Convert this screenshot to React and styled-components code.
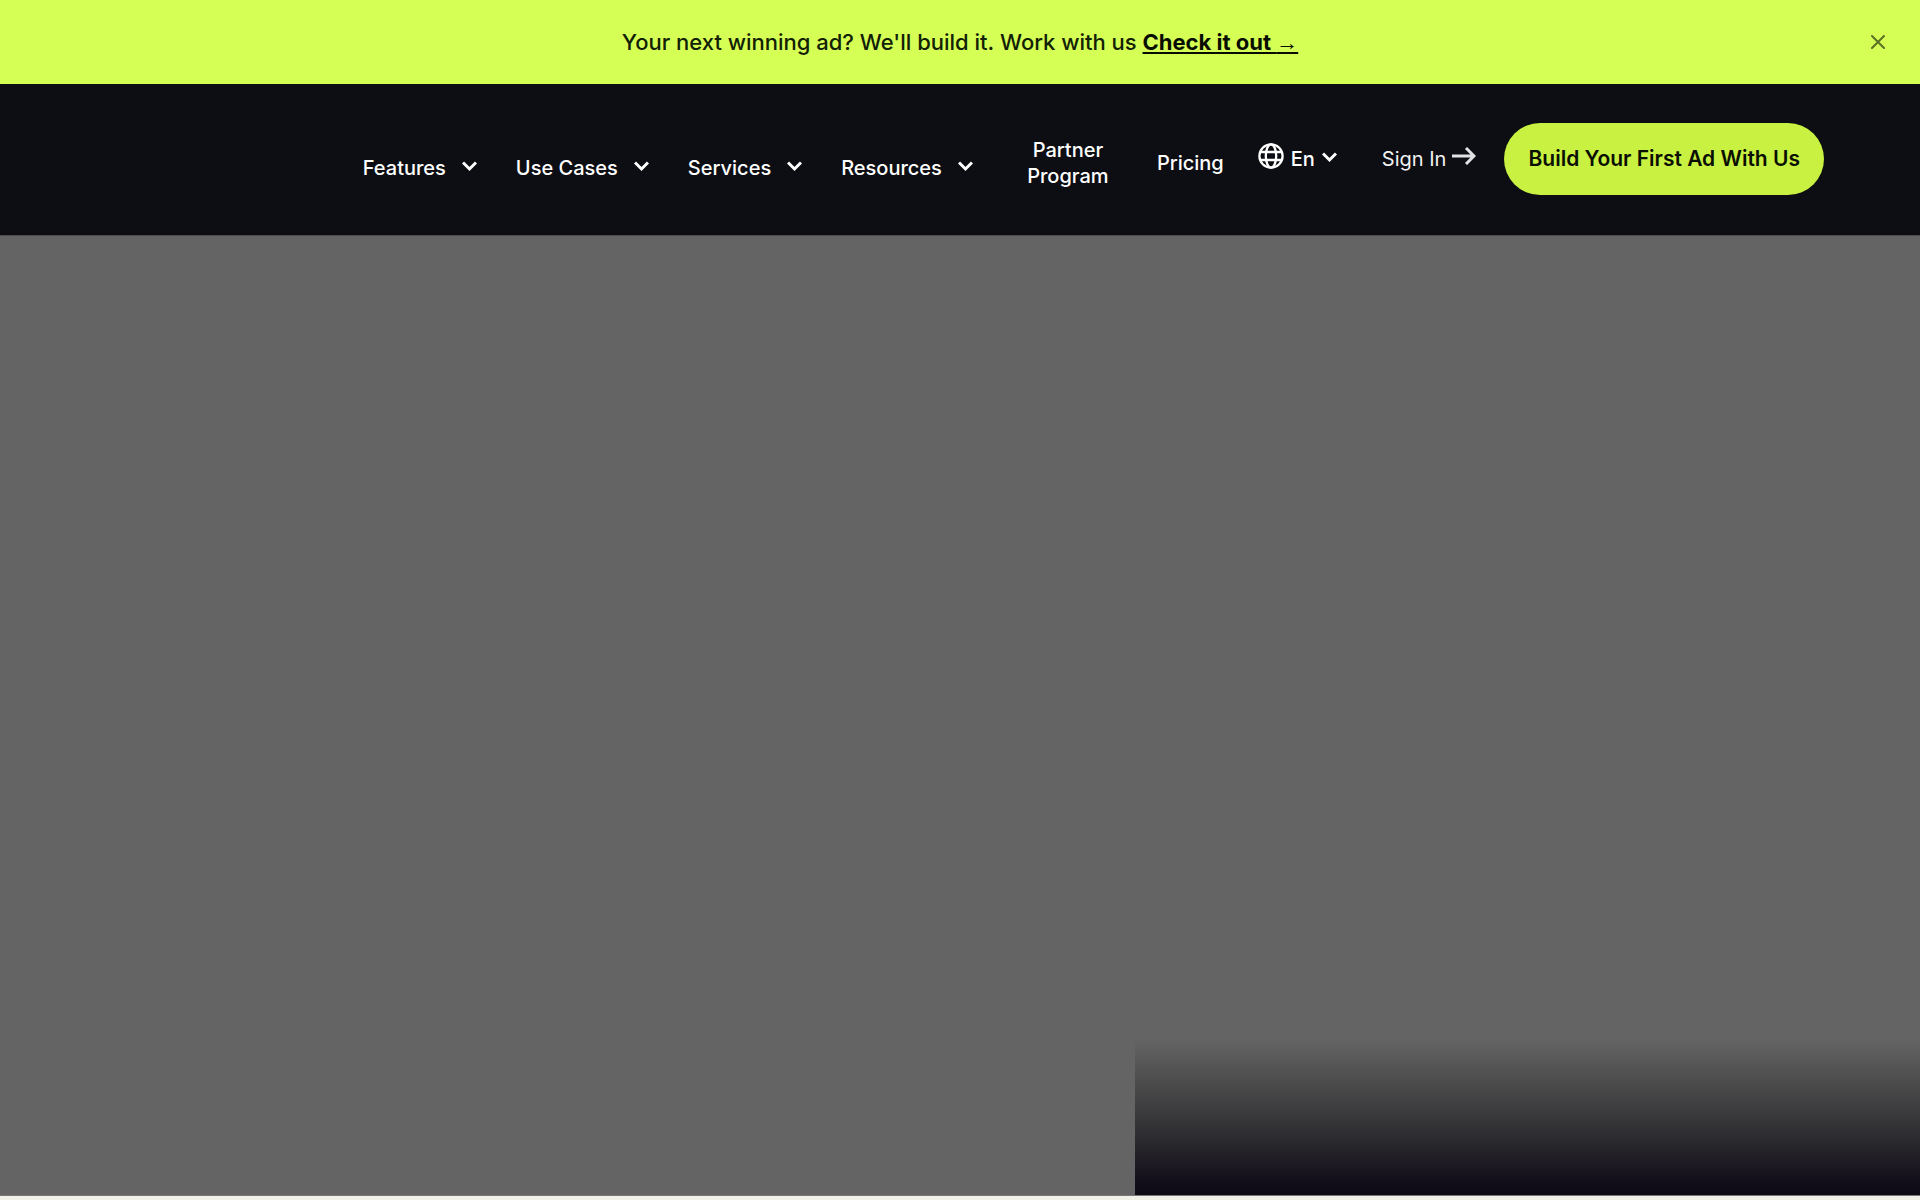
import React, { useState } from 'react';
import styled, { createGlobalStyle } from "styled-components";

const GlobalStyle = createGlobalStyle`
  * {
    box-sizing: border-box;
  }

  body {
    margin: 0;
    background: #f1f1e8;
    font-family: Inter, "Open Sans", sans-serif;
  }
`;

const Page = styled(`div`)`
  min-height: 100vh;
  display: flex;
  flex-direction: column;
  padding-bottom: 4px;
`;

const Banner = styled(`div`)`
  display: grid;
  grid-template-columns: 84px 1fr 84px;
  align-items: center;
  min-height: 84px;
  background: #d5ff55;
`;

const BannerText = styled(`p`)`
  margin: 0;
  text-align: center;
  font-size: 22px;
  font-weight: 500;
  line-height: 32px;
  color: #122006;
`;

const BannerLink = styled(`a`)`
  font-weight: 700;
  color: #080d02;
  text-decoration: underline;
  text-decoration-thickness: 2px;
  text-underline-offset: 2px;
`;

const LinkArrow = styled(`span`)`
  font-family: "Liberation Sans", sans-serif;
  font-weight: 400;
`;

const CloseButton = styled(`button`)`
  display: flex;
  justify-content: center;
  padding: 8px;
  border: none;
  background: none;
  color: #5b7024;
  cursor: pointer;
`;

const Header = styled(`header`)`
  display: flex;
  align-items: center;
  justify-content: flex-end;
  min-height: 151px;
  padding: 0 96px 2px;
  background: #0d0e13;
  color: #ffffff;
`;

const Nav = styled(`nav`)`
  display: flex;
  align-items: center;
`;

const Menus = styled(`div`)`
  display: flex;
  gap: 39px;
  padding-top: 18px;
`;

const MenuButton = styled(`button`)`
  display: flex;
  align-items: center;
  gap: ${props => props.$gap || '16px'};
  padding: 0;
  border: none;
  background: none;
  color: #ffffff;
  font-family: inherit;
  font-size: 20px;
  font-weight: 500;
  line-height: 26px;
  cursor: pointer;

  svg {
    margin-bottom: 2px;
  }
`;

const Links = styled(`div`)`
  display: flex;
  align-items: center;
  gap: 48px;
  padding: 8px 34px 0 54px;
`;

const NavLink = styled(`a`)`
  width: ${props => props.$width || 'auto'};
  color: #ffffff;
  font-size: 20px;
  font-weight: 500;
  line-height: 26px;
  text-align: center;
  text-decoration: none;
`;

const GlobeIcon = styled(`span`)`
  display: flex;
  padding-bottom: 4px;
`;

const SignIn = styled(`a`)`
  display: flex;
  align-items: center;
  gap: 6px;
  margin: 0 28px 0 45px;
  color: #f2f2f2;
  font-size: 20px;
  line-height: 26px;
  text-decoration: none;

  svg {
    margin-bottom: 5px;
  }
`;

const CtaButton = styled(`button`)`
  height: 72px;
  padding: 0 24px;
  border: none;
  border-radius: 36px;
  background: #c8f141;
  color: #0b0f03;
  font-family: inherit;
  font-size: 21px;
  font-weight: 600;
  white-space: nowrap;
  cursor: pointer;
`;

const Hero = styled(`main`)`
  flex: 1;
  display: flex;
  align-items: flex-end;
  justify-content: flex-end;
  background: #646464;
  border-top: 1px solid #4a4a4c;
  border-bottom: 1px solid #77777a;
`;

const Fade = styled(`div`)`
  width: calc(41% - 2px);
  height: 156px;
  background: linear-gradient(#646464, #4a4a4b 30%, #2a292d 66%, #100c18 94%, #0d0a15);
`;

function Chevron() {
    return (
        <svg width="15" height="11" viewBox="0 0 15 11" fill="none" aria-hidden="true">
            <path d="M1 1.5L7.5 8L14 1.5" stroke="currentColor" strokeWidth="3"/>
        </svg>
    );
}

function Globe() {
    return (
        <svg width="26" height="26" viewBox="0 0 26 26" fill="none" stroke="currentColor" strokeWidth="2.3" aria-hidden="true">
            <circle cx="13" cy="13" r="11.6"/>
            <ellipse cx="13" cy="13" rx="5.2" ry="11.6"/>
            <path d="M2.2 9H23.8M2.2 17H23.8"/>
        </svg>
    );
}

function Arrow() {
    return (
        <svg width="24" height="18" viewBox="0 0 24 18" fill="none" stroke="#e2e2e4" strokeWidth="3" aria-hidden="true">
            <path d="M0 9H22M14 1L22 9L14 17"/>
        </svg>
    );
}

const menus = ['Features', 'Use Cases', 'Services', 'Resources'];

function App() {
    const [showBanner, setShowBanner] = useState(true);

    return (
        <Page>
            <GlobalStyle/>
            {showBanner && (
                <Banner>
                    <span/>
                    <BannerText>
                        Your next winning ad? We'll build it. Work with us{' '}
                        <BannerLink href="#work-with-us">Check it out <LinkArrow>→</LinkArrow></BannerLink>
                    </BannerText>
                    <CloseButton aria-label="Close" onClick={() => setShowBanner(false)}>
                        <svg width="14" height="14" viewBox="0 0 14 14" fill="none" aria-hidden="true">
                            <path d="M1 1L13 13M13 1L1 13" stroke="currentColor" strokeWidth="2" strokeLinecap="round"/>
                        </svg>
                    </CloseButton>
                </Banner>
            )}
            <Header>
                <Nav>
                    <Menus>
                        {menus.map(name => (
                            <MenuButton key={name}>{name}<Chevron/></MenuButton>
                        ))}
                    </Menus>
                    <Links>
                        <NavLink href="#partners" $width="82px">Partner Program</NavLink>
                        <NavLink href="#pricing">Pricing</NavLink>
                    </Links>
                </Nav>
                <MenuButton aria-label="Language: En" $gap="7px">
                    <GlobeIcon><Globe/></GlobeIcon>En<Chevron/>
                </MenuButton>
                <SignIn href="#sign-in">Sign In<Arrow/></SignIn>
                <CtaButton>Build Your First Ad With Us</CtaButton>
            </Header>
            <Hero>
                <Fade/>
            </Hero>
        </Page>
    );
}

export default App;
